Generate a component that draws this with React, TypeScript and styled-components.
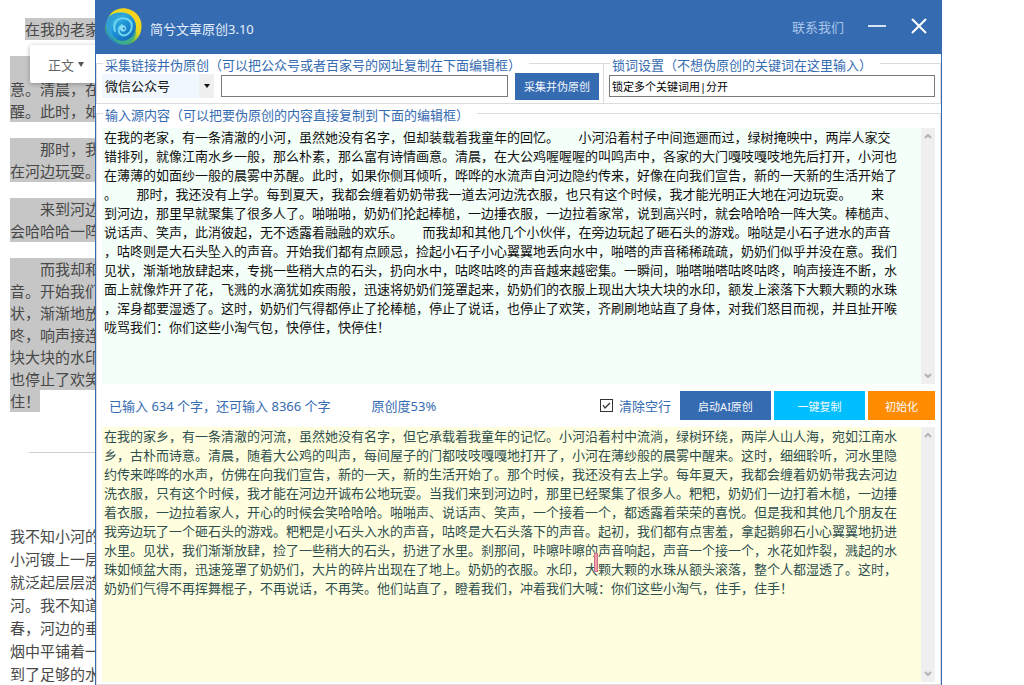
import React from "react";
import styled, { createGlobalStyle } from "styled-components";

const blue = "#356bb1";
const line = "#dcdcdc";

const GlobalStyle = createGlobalStyle`
  *, *::before, *::after { box-sizing: border-box; }
  body {
    margin: 0;
    background: #fff;
    font-family: "Noto Sans", "Noto Sans CJK SC", sans-serif;
    font-size: 13px;
  }
  button, input, select, textarea { font-family: inherit; margin: 0; }
`;

const Desktop = styled.div`
  position: relative;
  overflow: hidden;
`;

/* Document behind the application window */

const Article = styled.article`
  position: absolute;
  inset: 0 40% 0 0;
  display: flex;
  flex-direction: column;
  gap: 16px;
  padding: 18px 10px 0;
  color: #484848;
  font-size: 15px;
`;

const Paragraph = styled.p<{ $lineHeight?: number }>`
  margin: 0;
  line-height: ${(p) => p.$lineHeight ?? 22}px;
`;

const Line = styled.span<{ $selected?: boolean; $indent?: boolean; $short?: boolean }>`
  display: block;
  width: ${(p) => (p.$short ? "fit-content" : "auto")};
  white-space: nowrap;
  text-indent: ${(p) => (p.$indent ? "30px" : "0")};
  background: ${(p) => (p.$selected ? "#c6c6c6" : "transparent")};
  &:empty { height: 22px; }
`;

const FirstParagraph = styled(Paragraph)`
  padding-left: 15px;
`;

const Divider = styled.hr`
  flex: none;
  width: 100%;
  margin: 24px 0 56px 19px;
  border: 0;
  border-top: 1px solid #cfcfcf;
`;

const StyleMenu = styled.button`
  position: absolute;
  left: 30px;
  top: 45px;
  display: flex;
  align-items: center;
  gap: 4px;
  width: 80px;
  height: 38px;
  padding: 0 18px;
  border: 0;
  border-radius: 2px;
  background: #fff;
  box-shadow: 0 1px 5px rgba(0, 0, 0, 0.3);
  color: #666;
  font-size: 13px;
  white-space: nowrap;
`;

/* Application window */

const AppWindow = styled.main`
  position: relative;
  display: flex;
  flex-direction: column;
  min-height: 100vh;
  margin: 0 82px 0 95px;
  border: solid ${blue};
  border-width: 0 1px;
  background: #fff;
`;

const TitleBar = styled.header`
  display: flex;
  flex: none;
  align-items: center;
  height: 54px;
  padding: 0 13px 0 8px;
  background: ${blue};
  color: #e6f0fb;
`;

const Title = styled.h1`
  flex: 1;
  margin: 4px 0 0 8px;
  font-size: 13px;
  font-weight: 400;
  line-height: 20px;
`;

const ContactLink = styled.a`
  margin-right: 24px;
  color: #a9c5e9;
  font-size: 13px;
  line-height: 20px;
  text-decoration: none;
`;

const WindowButton = styled.button`
  display: flex;
  padding: 0;
  border: 0;
  background: none;
  & + & { margin-left: 24px; }
`;

const SettingsRow = styled.div`
  display: grid;
  grid-template-columns: 3fr 2fr;
  flex: none;
`;

const Group = styled.fieldset`
  min-width: 0;
  margin: 0;
  padding: 0 5px;
  border: 1px solid ${line};
`;

const SourceGroup = styled(Group)`
  padding-right: 4px;
  border-right: 0;
`;

const Legend = styled.legend`
  margin-left: 1px;
  padding: 4px 8px 0 2px;
  color: ${blue};
  font-size: 13px;
  line-height: 14px;
  white-space: nowrap;
`;

const Controls = styled.div`
  display: flex;
  align-items: center;
  gap: 7px;
  height: 31px;
  padding-bottom: 3px;
`;

const SelectBox = styled.label`
  position: relative;
  display: flex;
  flex: none;
  width: 112px;
  height: 24px;
`;

const SourceSelect = styled.select`
  width: 100%;
  padding: 0 3px;
  border: 0;
  border-radius: 0;
  appearance: none;
  background: #f0f7ff;
  color: #111;
  font-size: 13px;
`;

const SelectArrow = styled.span`
  position: absolute;
  inset: 0 0 0 auto;
  display: flex;
  align-items: center;
  justify-content: center;
  width: 15px;
  background: #efefef;
  pointer-events: none;
`;

const TextInput = styled.input`
  flex: 1;
  min-width: 0;
  height: 22px;
  padding: 0 2px;
  border: 1px solid #7a7a7a;
  border-radius: 0;
  background: #fff;
  color: #000;
  font-size: 11px;
`;

const ActionButton = styled.button<{ $color?: string; $width: number; $height?: number }>`
  flex: none;
  width: ${(p) => p.$width}px;
  height: ${(p) => p.$height ?? 29}px;
  padding: 0;
  border: 0;
  background: ${(p) => p.$color ?? blue};
  color: #f4f8fd;
  font-size: 11px;
`;

const ContentGroup = styled(Group)`
  display: flex;
  flex: 1;
  flex-direction: column;
  padding: 6px 5px 2px;
`;

/* The growing editor takes what the bars and the first editor leave of the window */
const Editor = styled.div<{ $background: string; $color: string; $grow?: boolean }>`
  position: relative;
  display: flex;
  flex: none;
  height: ${(p) => (p.$grow ? "calc(100vh - 430px)" : "256px")};
  min-height: 200px;
  background: ${(p) => p.$background};
  color: ${(p) => p.$color};
`;

const EditorText = styled.textarea`
  flex: 1;
  min-width: 0;
  padding: 0 2px;
  border: 0;
  outline: 0;
  resize: none;
  overflow: hidden;
  background: none;
  color: inherit;
  font-size: 13px;
  line-height: 19px;
  white-space: pre;
`;

const ScrollTrack = styled.div`
  display: flex;
  flex: none;
  flex-direction: column;
  justify-content: space-between;
  width: 14px;
  background: #efefef;
`;

const ScrollButton = styled.button`
  display: flex;
  align-items: center;
  justify-content: center;
  width: 14px;
  height: 16px;
  padding: 0;
  border: 0;
  background: none;
`;

const TextCursor = styled.span`
  position: absolute;
  left: 492px;
  top: 126px;
  width: 4px;
  height: 19px;
  border: 1px solid #cf6f88;
  background: #f0a0aa;
`;

const StatusBar = styled.div`
  display: flex;
  flex: none;
  align-items: center;
  gap: 3px;
  height: 43px;
  padding-left: 7px;
  color: ${blue};
`;

const Status = styled.output`
  margin-right: 38px;
  line-height: 20px;
  white-space: nowrap;
`;

const CheckLabel = styled.label`
  display: flex;
  align-items: center;
  gap: 6px;
  margin: 0 6px 0 auto;
  line-height: 20px;
  white-space: nowrap;
`;

const Checkbox = styled.input`
  width: 13px;
  height: 13px;
  margin: 0;
  border: 1px solid #333;
  appearance: none;
  background: #fff;
  &:not(:checked) + svg { display: none; }
`;

const CheckHolder = styled.span`
  position: relative;
  display: flex;
`;

const CheckMark = styled.svg`
  position: absolute;
  inset: 0;
  pointer-events: none;
`;

const sourceText = [
  "在我的老家，有一条清澈的小河，虽然她没有名字，但却装载着我童年的回忆。　　小河沿着村子中间迤逦而过，绿树掩映中，两岸人家交",
  "错排列，就像江南水乡一般，那么朴素，那么富有诗情画意。清晨，在大公鸡喔喔喔的叫鸣声中，各家的大门嘎吱嘎吱地先后打开，小河也",
  "在薄薄的如面纱一般的晨雾中苏醒。此时，如果你侧耳倾听，哗哗的水流声自河边隐约传来，好像在向我们宣告，新的一天新的生活开始了",
  "。　　那时，我还没有上学。每到夏天，我都会缠着奶奶带我一道去河边洗衣服，也只有这个时候，我才能光明正大地在河边玩耍。　　来",
  "到河边，那里早就聚集了很多人了。啪啪啪，奶奶们抡起棒槌，一边捶衣服，一边拉着家常，说到高兴时，就会哈哈哈一阵大笑。棒槌声、",
  "说话声、笑声，此消彼起，无不透露着融融的欢乐。　　而我却和其他几个小伙伴，在旁边玩起了砸石头的游戏。啪哒是小石子进水的声音",
  "，咕咚则是大石头坠入的声音。开始我们都有点顾忌，捡起小石子小心翼翼地丢向水中，啪嗒的声音稀稀疏疏，奶奶们似乎并没在意。我们",
  "见状，渐渐地放肆起来，专挑一些稍大点的石头，扔向水中，咕咚咕咚的声音越来越密集。一瞬间，啪嗒啪嗒咕咚咕咚，响声接连不断，水",
  "面上就像炸开了花，飞溅的水滴犹如疾雨般，迅速将奶奶们笼罩起来，奶奶们的衣服上现出大块大块的水印，额发上滚落下大颗大颗的水珠",
  "，浑身都要湿透了。这时，奶奶们气得都停止了抡棒槌，停止了说话，也停止了欢笑，齐刷刷地站直了身体，对我们怒目而视，并且扯开喉",
  "咙骂我们：你们这些小淘气包，快停住，快停住！",
].join("\n");

const resultText = [
  "在我的家乡，有一条清澈的河流，虽然她没有名字，但它承载着我童年的记忆。小河沿着村中流淌，绿树环绕，两岸人山人海，宛如江南水",
  "乡，古朴而诗意。清晨，随着大公鸡的叫声，每间屋子的门都吱吱嘎嘎地打开了，小河在薄纱般的晨雾中醒来。这时，细细聆听，河水里隐",
  "约传来哗哗的水声，仿佛在向我们宣告，新的一天，新的生活开始了。那个时候，我还没有去上学。每年夏天，我都会缠着奶奶带我去河边",
  "洗衣服，只有这个时候，我才能在河边开诚布公地玩耍。当我们来到河边时，那里已经聚集了很多人。粑粑，奶奶们一边打着木槌，一边捶",
  "着衣服，一边拉着家人，开心的时候会笑哈哈哈。啪啪声、说话声、笑声，一个接着一个，都透露着荣荣的喜悦。但是我和其他几个朋友在",
  "我旁边玩了一个砸石头的游戏。粑粑是小石头入水的声音，咕咚是大石头落下的声音。起初，我们都有点害羞，拿起鹅卵石小心翼翼地扔进",
  "水里。见状，我们渐渐放肆，捡了一些稍大的石头，扔进了水里。刹那间，咔嚓咔嚓的声音响起，声音一个接一个，水花如炸裂，溅起的水",
  "珠如倾盆大雨，迅速笼罩了奶奶们，大片的碎片出现在了地上。奶奶的衣服。水印，大颗大颗的水珠从额头滚落，整个人都湿透了。这时，",
  "奶奶们气得不再挥舞棍子，不再说话，不再笑。他们站直了，瞪着我们，冲着我们大喊：你们这些小淘气，住手，住手！",
].join("\n");

const selectedParagraphs = [
  ["", "意。清晨，在", "醒。此时，如"],
  ["那时，我", "在河边玩耍。"],
  ["来到河边", "会哈哈哈一阵"],
  ["而我却和", "音。开始我们", "状，渐渐地放", "咚，响声接连", "块大块的水印", "也停止了欢笑", "住！"],
];

const plainLines = ["我不知小河的", "小河镀上一层", "就泛起层层涟", "河。我不知道", "春，河边的垂", "烟中平铺着一", "到了足够的水"];

function Logo() {
  return (
    <svg width="38" height="40" viewBox="0 0 38 40" aria-hidden="true">
      <defs>
        <linearGradient id="rim" x1="0.85" y1="0.1" x2="0.2" y2="0.95">
          <stop offset="0" stopColor="#ffd21c" />
          <stop offset="0.4" stopColor="#e2d91f" />
          <stop offset="0.65" stopColor="#62b84b" />
          <stop offset="1" stopColor="#1b86c9" />
        </linearGradient>
        <linearGradient id="core" x1="0.1" y1="0.1" x2="0.8" y2="1">
          <stop offset="0" stopColor="#43c4e6" />
          <stop offset="0.5" stopColor="#1f92d6" />
          <stop offset="1" stopColor="#1466b8" />
        </linearGradient>
      </defs>
      <path d="M4 11C8 2 18-1 27 3C36 7 40 17 36 27C32 36 23 40 14 37C6 34 1 28 1 20Z" fill="url(#rim)" />
      <path d="M4 11C8 6 15 4 22 6C30 9 34 17 31 25C28 33 20 36 12 33C4 30 0 20 4 11Z" fill="url(#core)" />
      <path d="M4 11C9 5 17 5 23 8C15 7 8 12 7 19C6 26 10 31 15 34C5 32-1 21 4 11Z" fill="#2f9fd6" />
      <path d="M7 27C14 38 28 35 32 23C33 31 26 38 18 37C13 36 9 32 7 27Z" fill="#3cae8c" />
      <path d="M11 24C8 15 15 9 23 12C30 15 29 25 22 28C15 30 12 22 18 18" fill="none" stroke="#6fd6f0" strokeWidth="2" strokeLinecap="round" />
      <path d="M17 24C14 20 18 17 21 19C24 22 21 26 17 24Z" fill="#8be0f5" />
      <path d="M19 22C18 20 21 20 21 22C21 23 20 23 19 22Z" fill="#1c78ca" />
    </svg>
  );
}

function Scrollbar() {
  return (
    <ScrollTrack>
      <ScrollButton type="button" aria-label="向上滚动">
        <svg width="8" height="6" viewBox="0 0 8 6"><path d="M1 5L4 2L7 5" fill="none" stroke="#b4b4b4" strokeWidth="2" /></svg>
      </ScrollButton>
      <ScrollButton type="button" aria-label="向下滚动">
        <svg width="8" height="6" viewBox="0 0 8 6"><path d="M1 1L4 4L7 1" fill="none" stroke="#b4b4b4" strokeWidth="2" /></svg>
      </ScrollButton>
    </ScrollTrack>
  );
}

export default function App() {
  return (
    <>
      <GlobalStyle />
      <Desktop>
        <Article>
          <FirstParagraph>
            <Line $selected>在我的老家</Line>
          </FirstParagraph>
          {selectedParagraphs.map((lines) => (
            <Paragraph key={lines[1]}>
              {lines.map((text, i) => (
                <Line key={text} $selected $indent={i === 0} $short={text === "住！"}>
                  {text}
                </Line>
              ))}
            </Paragraph>
          ))}
          <Divider />
          <Paragraph $lineHeight={23}>
            {plainLines.map((text) => (
              <Line key={text}>{text}</Line>
            ))}
          </Paragraph>
        </Article>
        <StyleMenu type="button">
          正文
          <svg width="6" height="5" viewBox="0 0 6 5" aria-hidden="true"><path d="M0 0H6L3 5Z" fill="#555" /></svg>
        </StyleMenu>

        <AppWindow>
          <TitleBar>
            <Logo />
            <Title>简兮文章原创3.10</Title>
            <ContactLink href="#contact">联系我们</ContactLink>
            <WindowButton type="button" aria-label="最小化">
              <svg width="18" height="18" viewBox="0 0 18 18"><path d="M0 8H18" stroke="#d5e3f4" strokeWidth="2" /></svg>
            </WindowButton>
            <WindowButton type="button" aria-label="关闭">
              <svg width="18" height="18" viewBox="0 0 18 18"><path d="M2 1L16 15M16 1L2 15" stroke="#fff" strokeWidth="2" /></svg>
            </WindowButton>
          </TitleBar>

          <SettingsRow>
            <SourceGroup>
              <Legend>采集链接并伪原创（可以把公众号或者百家号的网址复制在下面编辑框）</Legend>
              <Controls>
                <SelectBox>
                  <SourceSelect aria-label="采集来源">
                    <option>微信公众号</option>
                  </SourceSelect>
                  <SelectArrow>
                    <svg width="6" height="4" viewBox="0 0 6 4"><path d="M0 0H6L3 4Z" fill="#111" /></svg>
                  </SelectArrow>
                </SelectBox>
                <TextInput type="text" aria-label="采集链接" />
                <ActionButton type="button" $width={84} $height={27}>采集并伪原创</ActionButton>
              </Controls>
            </SourceGroup>
            <Group>
              <Legend>锁词设置（不想伪原创的关键词在这里输入）</Legend>
              <Controls>
                <TextInput type="text" aria-label="锁词设置" defaultValue="锁定多个关键词用|分开" />
              </Controls>
            </Group>
          </SettingsRow>

          <ContentGroup>
            <Legend>输入源内容（可以把要伪原创的内容直接复制到下面的编辑框）</Legend>
            <Editor $background="#f4fff9" $color="#111">
              <EditorText aria-label="源内容" spellCheck={false} defaultValue={sourceText} />
              <Scrollbar />
            </Editor>
            <StatusBar>
              <Status>已输入 634 个字，还可输入 8366 个字</Status>
              <Status>原创度53%</Status>
              <CheckLabel>
                <CheckHolder>
                  <Checkbox type="checkbox" defaultChecked />
                  <CheckMark width="13" height="13" viewBox="0 0 13 13">
                    <path d="M3 6L5 9L10 4" fill="none" stroke="#333" strokeWidth="1.3" />
                  </CheckMark>
                </CheckHolder>
                清除空行
              </CheckLabel>
              <ActionButton type="button" $width={91}>启动AI原创</ActionButton>
              <ActionButton type="button" $width={91} $color="#00bfff">一键复制</ActionButton>
              <ActionButton type="button" $width={67} $color="#ff8c00">初始化</ActionButton>
            </StatusBar>
            <Editor $background="#ffffe0" $color="#2f4f4f" $grow>
              <EditorText aria-label="原创结果" spellCheck={false} defaultValue={resultText} />
              <TextCursor />
              <Scrollbar />
            </Editor>
          </ContentGroup>
        </AppWindow>
      </Desktop>
    </>
  );
}
